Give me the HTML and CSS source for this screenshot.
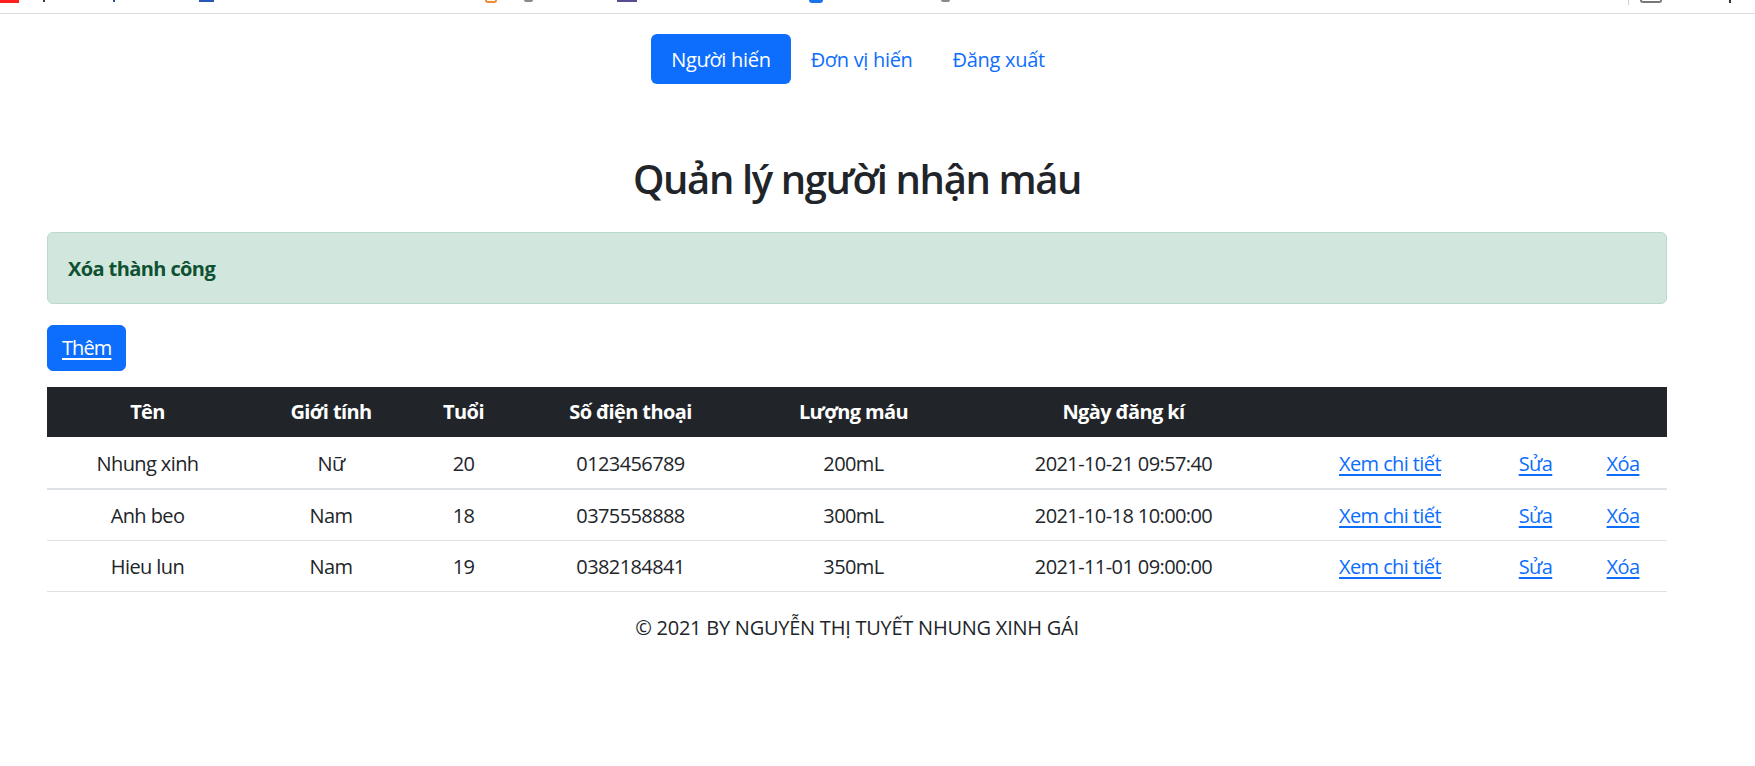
FILE: index.html
```html
<!DOCTYPE html>
<html lang="vi">
<head>
<meta charset="utf-8">
<title>Quản lý người nhận máu</title>
<link rel="stylesheet" href="styles.css">
</head>
<body>
<div class="chrome">
  <span class="frag f1"></span>
  <span class="frag f2"></span>
  <span class="frag f3"></span>
  <span class="frag f4"></span>
  <span class="frag f5"></span>
  <span class="frag f6"></span>
  <span class="frag f7"></span>
  <span class="frag f8"></span>
  <span class="frag f9"></span>
  <span class="frag f10"></span>
  <span class="frag f11"></span>
  <span class="frag f12"></span>
</div>
<nav class="topnav">
  <a class="pill active" href="#">Người hiến</a>
  <a class="pill" href="#">Đơn vị hiến</a>
  <a class="pill" href="#">Đăng xuất</a>
</nav>
<main class="page">
  <h2 class="title">Quản lý người nhận máu</h2>
  <div class="alert">Xóa thành công</div>
  <a class="btn" href="#">Thêm</a>
  <table class="data">
    <colgroup>
      <col class="c1"><col class="c2"><col class="c3"><col class="c4"><col class="c5"><col class="c6"><col class="c7"><col class="c8"><col class="c9">
    </colgroup>
    <thead>
      <tr><th>Tên</th><th>Giới tính</th><th>Tuổi</th><th>Số điện thoại</th><th>Lượng máu</th><th>Ngày đăng kí</th><th></th><th></th><th></th></tr>
    </thead>
    <tbody>
      <tr class="first"><td>Nhung xinh</td><td>Nữ</td><td>20</td><td>0123456789</td><td>200mL</td><td>2021-10-21 09:57:40</td><td><a href="#">Xem chi tiết</a></td><td><a href="#">Sửa</a></td><td><a href="#">Xóa</a></td></tr>
      <tr><td>Anh beo</td><td>Nam</td><td>18</td><td>0375558888</td><td>300mL</td><td>2021-10-18 10:00:00</td><td><a href="#">Xem chi tiết</a></td><td><a href="#">Sửa</a></td><td><a href="#">Xóa</a></td></tr>
      <tr><td>Hieu lun</td><td>Nam</td><td>19</td><td>0382184841</td><td>350mL</td><td>2021-11-01 09:00:00</td><td><a href="#">Xem chi tiết</a></td><td><a href="#">Sửa</a></td><td><a href="#">Xóa</a></td></tr>
    </tbody>
  </table>
  <footer class="foot">© 2021 BY NGUYỄN THỊ TUYẾT NHUNG XINH GÁI</footer>
</main>
</body>
</html>
```
FILE: styles.css
```css
* { box-sizing: border-box; }
html, body { margin: 0; padding: 0; background: #fff; }
body {
  font-family: "Segoe UI", "Open Sans", "Noto Sans", sans-serif;
  font-size: 20px;
  line-height: 30px;
  color: #212529;
  letter-spacing: -0.03em;
}

.chrome {
  height: 14px;
  border-bottom: 1px solid #dadce0;
  display: flex;
  align-items: flex-start;
}
.frag { display: block; flex: none; }
.f1 { width: 19px; height: 3px; background: #ff1f1f; }
.f2 { margin-left: 24px; width: 2px; height: 2px; background: #3a3a3a; }
.f3 { margin-left: 68px; width: 2px; height: 2px; background: #2b4c8c; }
.f4 { margin-left: 84px; width: 15px; height: 2px; background: #2a56b8; }
.f5 { margin-left: 271px; width: 12px; height: 3px; border: 2px solid #f28b30; border-top: none; border-radius: 0 0 6px 6px; }
.f6 { margin-left: 27px; width: 9px; height: 2px; background: #8a8a8a; border-radius: 0 0 4px 4px; }
.f7 { margin-left: 84px; width: 20px; height: 2px; background: #5b4b94; }
.f8 { margin-left: 172px; width: 14px; height: 3px; background: #1a73e8; border-radius: 0 0 6px 6px; }
.f9 { margin-left: 118px; width: 9px; height: 2px; background: #8a8a8a; border-radius: 0 0 4px 4px; }
.f10 { margin-left: 678px; width: 1px; height: 5px; background: #d0d0d0; }
.f11 { margin-left: 11px; width: 22px; height: 3px; border: 2px solid #777; border-top: none; border-radius: 0 0 3px 3px; }
.f12 { margin-left: 67px; width: 2px; height: 3px; background: #333; }

.topnav {
  display: flex;
  justify-content: center;
  width: 1620px;
  margin: 20px 0 0 47px;
  padding-left: 2px;
  letter-spacing: -0.015em;
}
.pill {
  display: block;
  padding: 11px 20px 9px;
  line-height: 30px;
  color: #0d6efd;
  text-decoration: none;
  border-radius: 6px;
}
.pill.active { background: #0d6efd; color: #fff; }

.page {
  width: 1620px;
  margin-left: 47px;
}
.title {
  margin: 71px 0 0;
  text-align: center;
  font-size: 40px;
  line-height: 48px;
  font-weight: 600;
  letter-spacing: -0.035em;
}
.alert {
  margin-top: 29px;
  padding: 21px 20px 19px;
  border: 1px solid #badbcc;
  border-radius: 6px;
  background: #d1e7dd;
  color: #0f5132;
  font-weight: 700;
  line-height: 30px;
}
.btn {
  display: inline-block;
  margin-top: 21px;
  padding: 7px 14px;
  border: 1px solid #0d6efd;
  border-radius: 6px;
  background: #0d6efd;
  color: #fff;
  line-height: 30px;
  letter-spacing: -0.045em;
  text-decoration: underline;
  text-underline-offset: 3px;
}
.data {
  margin-top: 16px;
  width: 1620px;
  border-collapse: collapse;
  table-layout: fixed;
}
.c1 { width: 201px; }
.c2 { width: 166px; }
.c3 { width: 99px; }
.c4 { width: 235px; }
.c5 { width: 211px; }
.c6 { width: 329px; }
.c7 { width: 204px; }
.c8 { width: 87px; }
.c9 { width: 88px; }
.data th {
  background: #212529;
  color: #fff;
  font-weight: 700;
  padding: 10px 0;
  line-height: 30px;
  text-align: center;
}
.data td {
  padding: 11px 0 9px;
  line-height: 30px;
  text-align: center;
  border-bottom: 1px solid #dee2e6;
}
.data tr.first td { padding: 12px 0 9px; border-bottom: 2px solid #dee2e6; }
.data a { color: #0d6efd; text-decoration: underline; text-underline-offset: 3px; }
.foot {
  margin-top: 21px;
  text-align: center;
  line-height: 30px;
  letter-spacing: -0.012em;
}
```
